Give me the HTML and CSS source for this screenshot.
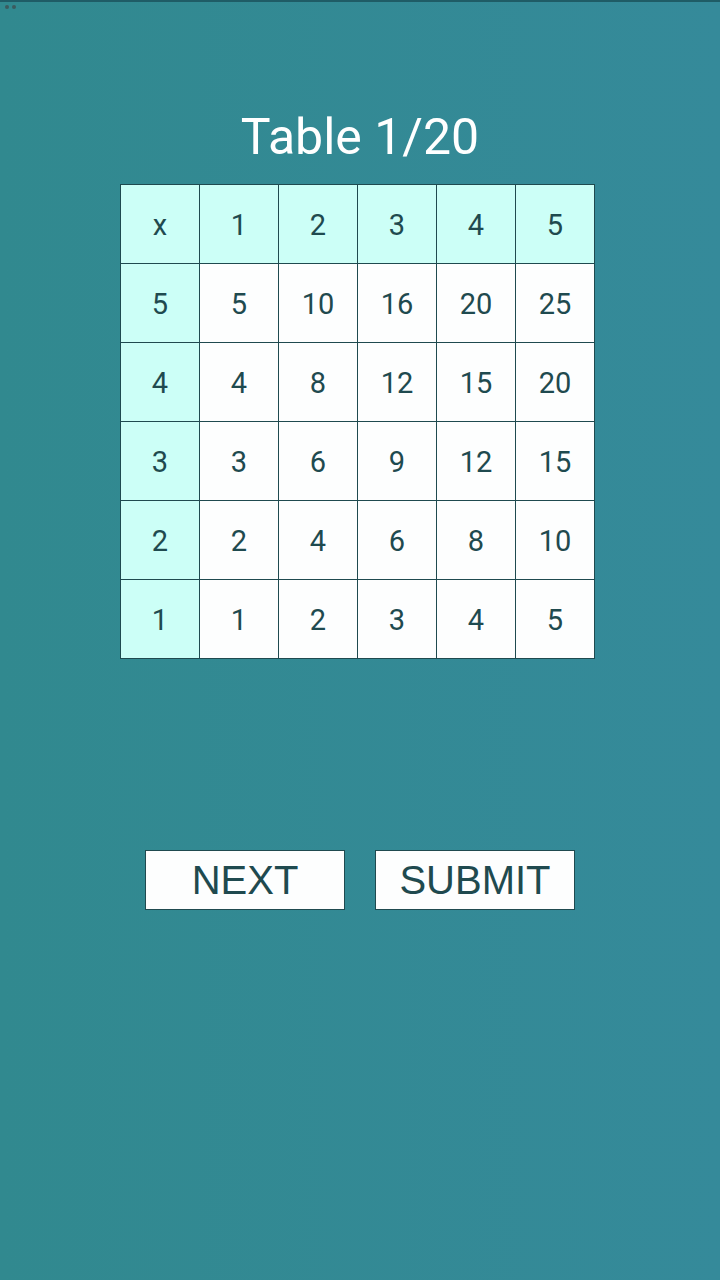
FILE: index.html
```html
<!DOCTYPE html>
<html lang="en">
<head>
    <meta charset="UTF-8">
    <meta name="viewport" content="width=device-width, initial-scale=1.0">
    <title>Table 1/20</title>
    <link rel="stylesheet" href="styles.css">
</head>
<body>
    <div class="status">
        <span class="dot"></span>
        <span class="dot"></span>
    </div>

    <h1 class="title">Table 1/20</h1>

    <div class="grid">
        <div class="cell head">x</div>
        <div class="cell head">1</div>
        <div class="cell head">2</div>
        <div class="cell head">3</div>
        <div class="cell head">4</div>
        <div class="cell head">5</div>

        <div class="cell head">5</div>
        <div class="cell">5</div>
        <div class="cell">10</div>
        <div class="cell">16</div>
        <div class="cell">20</div>
        <div class="cell">25</div>

        <div class="cell head">4</div>
        <div class="cell">4</div>
        <div class="cell">8</div>
        <div class="cell">12</div>
        <div class="cell">15</div>
        <div class="cell">20</div>

        <div class="cell head">3</div>
        <div class="cell">3</div>
        <div class="cell">6</div>
        <div class="cell">9</div>
        <div class="cell">12</div>
        <div class="cell">15</div>

        <div class="cell head">2</div>
        <div class="cell">2</div>
        <div class="cell">4</div>
        <div class="cell">6</div>
        <div class="cell">8</div>
        <div class="cell">10</div>

        <div class="cell head">1</div>
        <div class="cell">1</div>
        <div class="cell">2</div>
        <div class="cell">3</div>
        <div class="cell">4</div>
        <div class="cell">5</div>
    </div>

    <div class="actions">
        <button class="btn">NEXT</button>
        <button class="btn">SUBMIT</button>
    </div>
</body>
</html>
```

FILE: styles.css
```css
* {
    margin: 0;
    padding: 0;
    box-sizing: border-box;
}

html, body {
    height: 100%;
}

body {
    background: linear-gradient(to right, #31898f, #358a9a);
    font-family: Roboto, "Liberation Sans", sans-serif;
    color: #1f4a4f;
}

.status {
    height: 12px;
    border-top: 2px solid #1f5c66;
    display: flex;
    gap: 3px;
    padding: 3px 0 0 5px;
}

.dot {
    width: 4px;
    height: 4px;
    border-radius: 50%;
    background: #3b5a5e;
}

.title {
    margin-top: 96px;
    font-size: 50px;
    line-height: 59px;
    font-weight: 400;
    color: #ffffff;
    text-align: center;
}

.grid {
    margin: 17px 0 0 120px;
    width: 475px;
    display: grid;
    grid-template-columns: repeat(6, 78px);
    grid-auto-rows: 78px;
    gap: 1px;
    padding: 1px;
    background: #1f4a4f;
}

.cell {
    display: flex;
    align-items: center;
    justify-content: center;
    background: #fdfefe;
    font-size: 29px;
    padding-top: 2px;
}

.cell.head {
    background: #ccfff7;
}

.actions {
    margin-top: 191px;
    display: flex;
    justify-content: center;
    gap: 30px;
}

.btn {
    width: 200px;
    height: 60px;
    border: 1px solid #1f4a4f;
    background: #fdfefe;
    color: #1f4a4f;
    font-family: "Liberation Sans", Arial, sans-serif;
    font-size: 40px;
    line-height: 58px;
    cursor: pointer;
}
```
